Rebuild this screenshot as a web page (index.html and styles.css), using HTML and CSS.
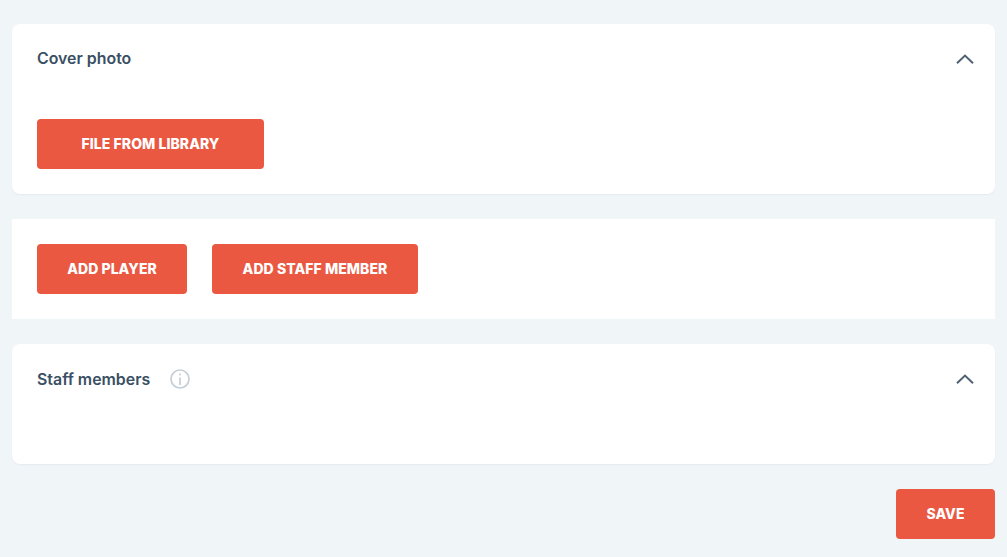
FILE: index.html
```html
<!DOCTYPE html>
<html lang="en">
<head>
  <meta charset="UTF-8">
  <meta name="viewport" content="width=device-width, initial-scale=1.0">
  <title>Team</title>
  <link rel="stylesheet" href="styles.css">
</head>
<body>
  <div class="page">
    <section class="card card-cover">
      <div class="card-head">
        <h2 class="card-title">Cover photo</h2>
        <svg class="chevron" width="18" height="10" viewBox="0 0 18 10"><path d="M1 9.2 L9 1.6 L17 9.2"/></svg>
      </div>
      <button class="btn btn-library">FILE FROM LIBRARY</button>
    </section>

    <section class="card card-actions">
      <button class="btn btn-player">ADD PLAYER</button>
      <button class="btn btn-staff">ADD STAFF MEMBER</button>
    </section>

    <section class="card card-staff">
      <div class="card-head">
        <div class="title-group">
          <h2 class="card-title">Staff members</h2>
          <svg class="info" width="20" height="20" viewBox="0 0 20 20">
            <circle cx="10" cy="10" r="9"/>
            <path d="M10 8.5 V16"/>
            <path d="M10 4.5 V6.3"/>
          </svg>
        </div>
        <svg class="chevron" width="18" height="10" viewBox="0 0 18 10"><path d="M1 9.2 L9 1.6 L17 9.2"/></svg>
      </div>
    </section>

    <div class="footer">
      <button class="btn btn-save">SAVE</button>
    </div>
  </div>
</body>
</html>
```

FILE: styles.css
```css
body {
  margin: 0;
  background-color: #f0f5f8;
  font-family: Inter, "Open Sans", sans-serif;
}

.page {
  display: flex;
  flex-direction: column;
  gap: 25px;
  padding: 24px 12px 18px;
}

.card {
  background-color: #fff;
  border-radius: 8px;
  box-shadow: 0 1px 2px rgba(40, 70, 90, 0.06);
  padding: 0 25px;
}

.card-cover {
  height: 170px;
  box-sizing: border-box;
}

.card-actions {
  display: flex;
  align-items: center;
  gap: 25px;
  height: 100px;
  border-radius: 0;
  box-shadow: none;
}

.card-staff {
  height: 120px;
  box-sizing: border-box;
}

.card-head {
  display: flex;
  align-items: center;
  justify-content: space-between;
  height: 70px;
  margin-bottom: 25px;
}

.title-group {
  display: flex;
  align-items: center;
  gap: 20px;
}

.card-title {
  margin: 0 0 1px;
  font-size: 15.9px;
  font-weight: 600;
  color: #3a4f63;
}

.title-group .card-title {
  margin-bottom: 0;
}

.chevron {
  margin-right: -4px;
}

.chevron path {
  fill: none;
  stroke: #4f6274;
  stroke-width: 2;
}

.info circle,
.info path {
  fill: none;
  stroke: #c3ced6;
  stroke-width: 1.7;
}

.btn {
  display: block;
  height: 50px;
  padding: 0 0 2px;
  border: none;
  border-radius: 4px;
  background-color: #ea5842;
  color: #fff;
  font-family: inherit;
  font-size: 14px;
  font-weight: 800;
  letter-spacing: 0.06px;
  cursor: pointer;
}

.btn-library {
  width: 227px;
}

.btn-player {
  width: 150px;
}

.btn-staff {
  width: 206px;
}

.btn-save {
  width: 99px;
}

.footer {
  display: flex;
  justify-content: flex-end;
}
```
